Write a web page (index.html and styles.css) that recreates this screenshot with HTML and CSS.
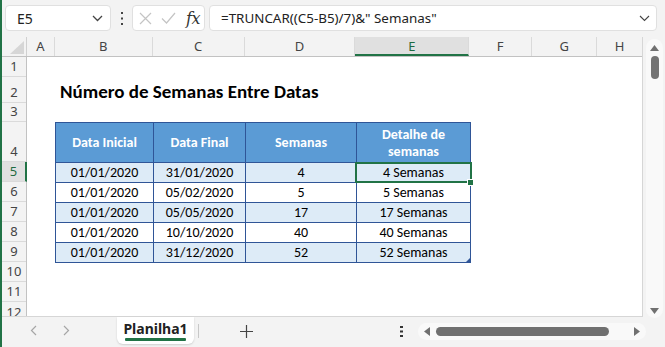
FILE: index.html
```html
<!DOCTYPE html>
<html lang="pt">
<head>
    <meta charset="UTF-8">
    <meta name="viewport" content="width=device-width, initial-scale=1.0">
    <title>Planilha1 - Número de Semanas Entre Datas</title>
    <link rel="stylesheet" href="styles.css">
</head>
<body>
    <div class="app">
        <!-- formula bar -->
        <div class="formula-bar">
            <div class="name-box">
                <span>E5</span>
                <svg class="chevron" width="11" height="7" viewBox="0 0 11 7"><path d="M1 1l4.5 4.5L10 1" fill="none" stroke="#444" stroke-width="1.3"/></svg>
            </div>
            <div class="kebab">
                <svg width="4" height="13" viewBox="0 0 4 13"><rect x="1" y="0" width="2" height="2" fill="#444"/><rect x="1" y="5.5" width="2" height="2" fill="#444"/><rect x="1" y="11" width="2" height="2" fill="#444"/></svg>
            </div>
            <div class="fx-box">
                <svg width="13" height="13" viewBox="0 0 13 13"><path d="M1 1l11 11M12 1L1 12" stroke="#c4c4c4" stroke-width="1.2"/></svg>
                <svg width="15" height="12" viewBox="0 0 15 12"><path d="M1 6.5l4.5 4.5L14 1" fill="none" stroke="#c4c4c4" stroke-width="1.2"/></svg>
                <span class="fx">fx</span>
            </div>
            <div class="formula-input">
                <span>=TRUNCAR((C5-B5)/7)&amp;" Semanas"</span>
                <svg class="chevron" width="11" height="7" viewBox="0 0 11 7"><path d="M1 1l4.5 4.5L10 1" fill="none" stroke="#444" stroke-width="1.1"/></svg>
            </div>
        </div>

        <!-- sheet -->
        <div class="sheet-area">
            <div class="sheet">
                <div class="col-heads">
                    <div class="corner">
                        <svg width="14" height="13" viewBox="0 0 14 13"><polygon points="14,0 14,13 0,13" fill="#d6d6d6"/></svg>
                    </div>
                    <div class="col-head w-a">A</div>
                    <div class="col-head w-b">B</div>
                    <div class="col-head w-c">C</div>
                    <div class="col-head w-d">D</div>
                    <div class="col-head w-e active">E</div>
                    <div class="col-head w-f">F</div>
                    <div class="col-head w-g">G</div>
                    <div class="col-head w-h">H</div>
                </div>
                <div class="sheet-body">
                    <div class="row-heads">
                        <div class="row-head h20">1</div>
                        <div class="row-head h26">2</div>
                        <div class="row-head h19">3</div>
                        <div class="row-head h40">4</div>
                        <div class="row-head h20 active">5</div>
                        <div class="row-head h20">6</div>
                        <div class="row-head h20">7</div>
                        <div class="row-head h20">8</div>
                        <div class="row-head h20">9</div>
                        <div class="row-head h20">10</div>
                        <div class="row-head h20">11</div>
                        <div class="row-head h14">12</div>
                    </div>
                    <div class="cells">
                        <div class="title">Número de Semanas Entre Datas</div>
                        <table class="data-table">
                            <colgroup>
                                <col class="c-b"><col class="c-c"><col class="c-d"><col class="c-e">
                            </colgroup>
                            <tr class="head">
                                <th>Data Inicial</th>
                                <th>Data Final</th>
                                <th>Semanas</th>
                                <th>Detalhe de semanas</th>
                            </tr>
                            <tr class="band">
                                <td>01/01/2020</td><td>31/01/2020</td><td>4</td><td class="selected">4 Semanas</td>
                            </tr>
                            <tr>
                                <td>01/01/2020</td><td>05/02/2020</td><td>5</td><td>5 Semanas</td>
                            </tr>
                            <tr class="band">
                                <td>01/01/2020</td><td>05/05/2020</td><td>17</td><td>17 Semanas</td>
                            </tr>
                            <tr>
                                <td>01/01/2020</td><td>10/10/2020</td><td>40</td><td>40 Semanas</td>
                            </tr>
                            <tr class="band">
                                <td>01/01/2020</td><td>31/12/2020</td><td>52</td><td class="last">52 Semanas</td>
                            </tr>
                        </table>
                    </div>
                </div>
            </div>
            <div class="vscroll">
                <div class="vtrack">
                    <svg class="arrow-up" width="9" height="6" viewBox="0 0 9 6"><polygon points="4.5,0 9,6 0,6" fill="#707070"/></svg>
                    <div class="vthumb"></div>
                    <div class="spacer"></div>
                    <svg class="arrow-down" width="9" height="6" viewBox="0 0 9 6"><polygon points="0,0 9,0 4.5,6" fill="#707070"/></svg>
                </div>
            </div>
        </div>

        <!-- sheet tabs -->
        <div class="tab-bar">
            <div class="nav">
                <svg width="7" height="11" viewBox="0 0 7 11"><path d="M6 1L1.5 5.5 6 10" fill="none" stroke="#a6a6a6" stroke-width="1.2"/></svg>
                <svg width="7" height="11" viewBox="0 0 7 11"><path d="M1 1l4.5 4.5L1 10" fill="none" stroke="#a6a6a6" stroke-width="1.2"/></svg>
            </div>
            <div class="tab">Planilha1</div>
            <div class="tab-sep"></div>
            <svg class="add" width="13" height="13" viewBox="0 0 13 13"><path d="M6.5 0v13M0 6.5h13" stroke="#444" stroke-width="1.2"/></svg>
            <div class="spacer"></div>
            <svg class="tab-kebab" width="3" height="11" viewBox="0 0 3 11"><rect x="0" y="0" width="3" height="2" fill="#333"/><rect x="0" y="4.5" width="3" height="2" fill="#333"/><rect x="0" y="9" width="3" height="2" fill="#333"/></svg>
            <div class="hscroll">
                <svg width="6" height="9" viewBox="0 0 6 9"><polygon points="6,0 6,9 0,4.5" fill="#707070"/></svg>
                <div class="hthumb"></div>
                <svg width="6" height="9" viewBox="0 0 6 9"><polygon points="0,0 6,4.5 0,9" fill="#707070"/></svg>
            </div>
        </div>
    </div>
</body>
</html>
```

FILE: styles.css
```css
body {
    margin: 0;
    font-family: 'Noto Sans', 'Open Sans', sans-serif;
    color: #222;
}

.app {
    width: 663px;
    height: 347px;
    border-left: 2px solid #217346;
    background: #f3f3f3;
    display: flex;
    flex-direction: column;
    overflow: hidden;
}

/* formula bar */
.formula-bar {
    height: 37px;
    flex-shrink: 0;
    box-sizing: border-box;
    padding: 5px 0 0 3px;
    display: flex;
    align-items: flex-start;
}

.name-box {
    width: 106px;
    height: 26px;
    box-sizing: border-box;
    background: white;
    border: 1px solid #e0e0e0;
    border-radius: 4px;
    display: flex;
    align-items: center;
    justify-content: space-between;
    padding: 0 7px 0 11px;
    font-size: 14px;
    color: #222;
}

.kebab {
    width: 21px;
    height: 26px;
    display: flex;
    align-items: center;
    justify-content: center;
}

.fx-box {
    width: 73px;
    height: 26px;
    box-sizing: border-box;
    background: white;
    border: 1px solid #e0e0e0;
    border-radius: 4px;
    display: flex;
    align-items: center;
    padding-left: 6px;
    gap: 9px;
}

.fx {
    font-family: 'DejaVu Serif', 'Liberation Serif', serif;
    font-style: italic;
    font-size: 16px;
    color: #333;
    margin-left: 1px;
    letter-spacing: -0.5px;
}

.formula-input {
    width: 448px;
    height: 26px;
    margin-left: 4px;
    box-sizing: border-box;
    background: white;
    border: 1px solid #e0e0e0;
    border-radius: 4px;
    display: flex;
    align-items: center;
    justify-content: space-between;
    padding: 0 6px 0 11px;
    font-size: 13.4px;
    color: #222;
}

/* sheet */
.sheet-area {
    display: flex;
    height: 280px;
    flex-shrink: 0;
}

.sheet {
    width: 641px;
    border-right: 1px solid #d6d6d6;
    border-bottom: 1px solid #d6d6d6;
    box-sizing: border-box;
}

.col-heads {
    display: flex;
    height: 20px;
    border-bottom: 1px solid #c2c2c2;
    box-sizing: border-box;
}

.corner {
    width: 25px;
    box-sizing: border-box;
    border-right: 1px solid #d0d0d0;
    display: flex;
    align-items: flex-end;
    justify-content: flex-end;
    padding: 0 2px 2px 0;
}

.col-head {
    box-sizing: border-box;
    border-right: 1px solid #dadada;
    font-size: 13px;
    color: #444;
    text-align: center;
    line-height: 19px;
}

.col-head.active {
    background: #e0e0e0;
    border-bottom: 2px solid #217346;
    color: #1e6b41;
}

.w-a { width: 28px; }
.w-b { width: 98px; }
.w-c { width: 92px; }
.w-d { width: 111px; }
.w-e { width: 114px; }
.w-f { width: 63px; }
.w-g { width: 65px; }
.w-h { width: 45px; border-right: none; }

.sheet-body {
    display: flex;
    height: 259px;
    overflow: hidden;
}

.row-heads {
    width: 25px;
    flex-shrink: 0;
    box-sizing: border-box;
    border-right: 1px solid #c2c2c2;
}

.row-head {
    box-sizing: border-box;
    border-bottom: 1px solid #dadada;
    font-size: 13px;
    color: #444;
    display: flex;
    align-items: flex-end;
    justify-content: center;
    padding-bottom: 1px;
    overflow: hidden;
}

.row-head.active {
    background: #e0e0e0;
    border-right: 2px solid #217346;
    margin-right: -1px;
    color: #1e6b41;
}

.h14 {
    height: 14px;
    align-items: flex-start;
    padding: 1px 0 0;
    border-bottom: none;
}
.h19 { height: 19px; }
.h20 { height: 20px; }
.h26 { height: 26px; }
.h40 { height: 40px; }

.cells {
    flex: 1;
    background: white;
    display: grid;
    grid-template-columns: 28px 98px 92px 111px 114px 63px 65px 45px;
    grid-template-rows: 20px 26px 19px 40px repeat(7, 20px) 14px;
    font-family: Carlito, Lato, sans-serif;
}

.title {
    grid-row: 2;
    grid-column: 2 / 7;
    align-self: center;
    padding-left: 5px;
    font-size: 19px;
    font-weight: bold;
    color: #000;
    padding-top: 3px;
}

/* table */
.data-table {
    grid-row: 4 / 10;
    grid-column: 2 / 6;
    width: 416px;
    table-layout: fixed;
    border-collapse: separate;
    border-spacing: 0;
    border-right: 1px solid #2f5597;
    border-bottom: 1px solid #2f5597;
    font-size: 14px;
    color: #000;
    align-self: start;
}

.c-b { width: 98px; }
.c-c { width: 92px; }
.c-d { width: 111px; }
.c-e { width: 114px; }

.data-table th,
.data-table td {
    border-left: 1px solid #2f5597;
    border-top: 1px solid #2f5597;
    padding: 0 2px;
    text-align: center;
    vertical-align: middle;
    line-height: 17px;
}

.data-table tr {
    height: 20px;
}

.data-table tr.head {
    height: 40px;
}

.data-table th {
    background: #5b9bd5;
    color: white;
    font-weight: bold;
    padding: 0 14px;
}

.data-table tr.band td {
    background: #ddebf7;
}

.data-table td.selected {
    position: relative;
}

.data-table td.selected::after {
    content: '';
    position: absolute;
    left: -2px;
    top: -1px;
    right: -2px;
    bottom: -1px;
    border: 2px solid #217346;
}

.data-table td.selected::before {
    content: '';
    position: absolute;
    right: -4px;
    bottom: -4px;
    width: 5px;
    height: 5px;
    background: #217346;
    border: 1px solid white;
    z-index: 1;
}

.data-table td.last {
    position: relative;
}

.data-table td.last::after {
    content: '';
    position: absolute;
    right: 0;
    bottom: 0;
    border-style: solid;
    border-width: 0 0 4px 4px;
    border-color: transparent transparent #2f5597 transparent;
}

/* vertical scrollbar */
.vscroll {
    width: 22px;
    padding: 2px 2px 0 3px;
    box-sizing: border-box;
}

.vtrack {
    height: 279px;
    background: #f9f9f9;
    border-radius: 9px;
    display: flex;
    flex-direction: column;
    align-items: center;
    padding: 6px 0 4px;
    box-sizing: border-box;
}

.vthumb {
    width: 8px;
    height: 23px;
    background: #737373;
    border-radius: 4px;
    margin-top: 5px;
}

.vtrack .spacer {
    flex: 1;
}

/* tab bar */
.tab-bar {
    flex: 1;
    display: flex;
    align-items: flex-start;
}

.nav {
    width: 115px;
    height: 27px;
    display: flex;
    align-items: center;
    padding-left: 28px;
    gap: 26px;
    box-sizing: border-box;
}

.tab {
    width: 77px;
    height: 27px;
    background: white;
    border-radius: 0 0 6px 6px;
    box-shadow: 0 1px 2px rgba(0, 0, 0, 0.15);
    font-family: 'Noto Sans', 'Open Sans', sans-serif;
    font-weight: bold;
    font-size: 14px;
    color: #222;
    text-align: center;
    line-height: 24px;
    position: relative;
}

.tab::after {
    content: '';
    position: absolute;
    left: 8px;
    right: 8px;
    bottom: 3px;
    height: 3px;
    background: #217346;
    border-radius: 1px;
}

.tab-sep {
    width: 1px;
    height: 14px;
    background: #c8c8c8;
    margin: 7px 0 0 4px;
}

.add {
    margin: 8px 0 0 41px;
}

.tab-bar .spacer {
    flex: 1;
}

.tab-kebab {
    margin: 9px 15px 0 0;
}

.hscroll {
    width: 228px;
    height: 17px;
    margin: 6px 19px 0 0;
    background: #f9f9f9;
    border-radius: 9px;
    display: flex;
    align-items: center;
    padding: 0 6px;
    box-sizing: border-box;
    gap: 6px;
}

.hthumb {
    width: 174px;
    height: 9px;
    background: #707070;
    border-radius: 5px;
    margin-right: 19px;
}
```
